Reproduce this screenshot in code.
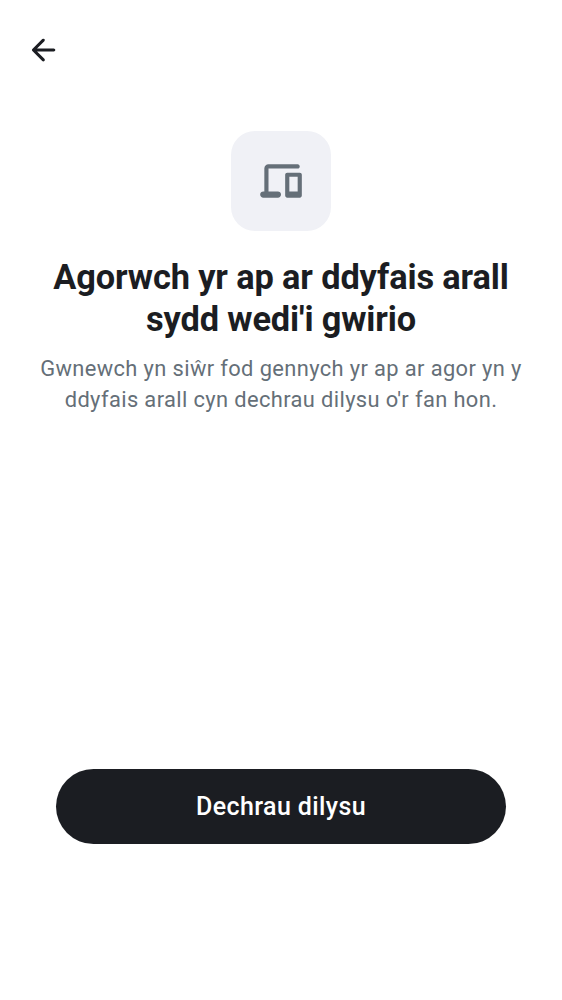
<main class="screen">
  <header><button class="back" aria-label="Yn ôl"><svg viewBox="-0.2 0 24 24" width="36" height="36"><path fill="currentColor" d="m7.83 13 4.9 4.9q.3.3.287.7t-.312.7q-.3.275-.7.287-.4.013-.7-.287l-6.6-6.6a.9.9 0 0 1-.213-.325A1.1 1.1 0 0 1 4.425 12q0-.2.067-.375a.9.9 0 0 1 .213-.325l6.6-6.6a.93.93 0 0 1 .688-.275q.411 0 .712.275.3.3.3.713t-.3.712L7.825 11H19q.425 0 .712.287.288.288.288.713t-.288.712A.97.97 0 0 1 19 13z"/></svg></button></header>
  <section class="intro">
    <div class="badge"><svg viewBox="0 0 24 24" width="50" height="50"><path fill="currentColor" d="M3.5 20q-.625 0-1.062-.437A1.45 1.45 0 0 1 2 18.5q0-.625.438-1.062A1.45 1.45 0 0 1 3.5 17H4V6q0-.824.588-1.412A1.93 1.93 0 0 1 6 4h14q.424 0 .712.287Q21 4.576 21 5t-.288.713A.97.97 0 0 1 20 6H6v11h4.5q.624 0 1.063.438.437.436.437 1.062t-.437 1.063A1.45 1.45 0 0 1 10.5 20zm11.5 0a.97.97 0 0 1-.712-.288A.97.97 0 0 1 14 19V9q0-.424.288-.713A.97.97 0 0 1 15 8h6q.424 0 .712.287Q22 8.576 22 9v10q0 .424-.288.712A.97.97 0 0 1 21 20zm1-3h4v-7h-4z"/></svg></div>
    <h1>Agorwch yr ap ar ddyfais arall<br />sydd wedi'i gwirio</h1>
    <p>Gwnewch yn siŵr fod gennych yr ap ar agor yn y<br />ddyfais arall cyn dechrau dilysu o'r fan hon.</p>
  </section>
  <footer><button class="primary">Dechrau dilysu</button></footer>
</main>

<style>
  :global(body) { margin: 0; background: #fff; }
  .screen { box-sizing: border-box; height: 1000px; display: flex; flex-direction: column; padding-bottom: 156px; font-family: Roboto, sans-serif; color: #1b1d22; }
  button { border: 0; padding: 0; font: inherit; }
  header { height: 100px; box-sizing: border-box; padding: 32px 25px; }
  .back { display: flex; width: 36px; height: 36px; background: none; color: #1b1d22; }
  .intro { flex: 1; padding-top: 31px; display: flex; flex-direction: column; align-items: center; text-align: center; white-space: nowrap; }
  .badge { width: 100px; height: 100px; border-radius: 24px; background: #f0f1f6; color: #656f78; display: flex; align-items: center; justify-content: center; }
  h1 { margin: 25px 0 0; font-size: 34.375px; line-height: 42px; font-weight: 700; letter-spacing: -.13px; }
  p { margin: 13px 0 0; font-size: 21.875px; line-height: 31px; letter-spacing: .38px; color: #656f78; }
  footer { padding: 0 56px; }
  .primary { width: 100%; height: 75px; border-radius: 38px; background: #1b1d22; color: #fff; font-size: 25px; font-weight: 500; letter-spacing: .4px; display: flex; align-items: center; justify-content: center; }
</style>
